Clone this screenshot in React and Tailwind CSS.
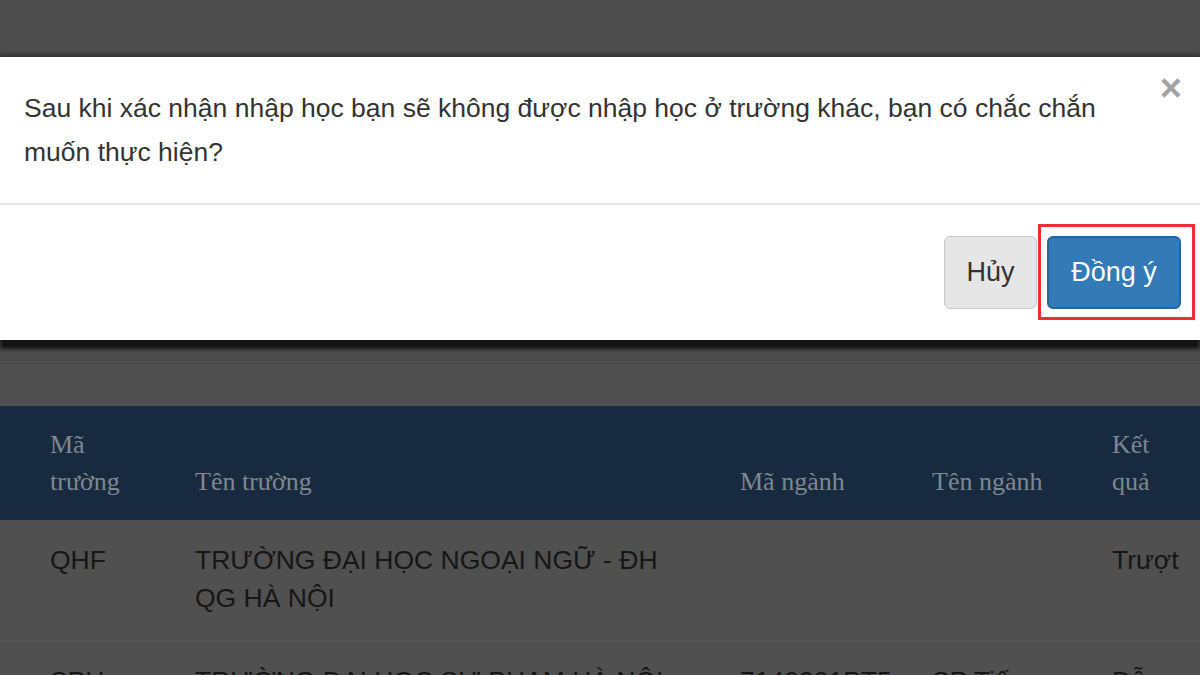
import React from "react";

const sans = { fontFamily: '"Liberation Sans", Arial, sans-serif' };
const serif = { fontFamily: '"Liberation Serif", "Times New Roman", serif' };

const rows = [
  { code: "QHF", school: "TRƯỜNG ĐẠI HỌC NGOẠI NGỮ - ĐH QG HÀ NỘI", major: "", majorName: "", result: "Trượt" },
  { code: "SPH", school: "TRƯỜNG ĐẠI HỌC SƯ PHẠM HÀ NỘI", major: "7140231PT5", majorName: "SP Tiếng Anh", result: "Đỗ" },
];

function ResultsTable() {
  return (
    <div className="bg-[#505050]">
      {/* header */}
      <div
        className="grid grid-cols-[145px_545px_192px_180px_1fr] items-end bg-[#182a3f] pl-[50px] pt-[20px] pb-[20px] text-[26px] leading-[37px] text-[#7f8791]"
        style={serif}
      >
        <div>
          Mã
          <br />
          trường
        </div>
        <div>Tên trường</div>
        <div>Mã ngành</div>
        <div>Tên ngành</div>
        <div>
          Kết
          <br />
          quả
        </div>
      </div>
      {rows.map((r) => (
        <div
          key={r.code}
          className="grid grid-cols-[145px_545px_192px_180px_1fr] border-b border-[#575757] pl-[50px] pt-[21px] pb-[23px] text-[26.5px] leading-[38px] text-[#161616]"
          style={sans}
        >
          <div>{r.code}</div>
          <div className="pr-[60px]">{r.school}</div>
          <div className="pr-[10px]">{r.major}</div>
          <div className="pr-[40px]">{r.majorName}</div>
          <div>{r.result}</div>
        </div>
      ))}
    </div>
  );
}

function ConfirmModal() {
  return (
    <div
      className="absolute left-0 right-0 top-[57px] bg-white shadow-[0_-3px_4px_rgba(0,0,0,0.35),0_9px_4px_rgba(0,0,0,0.75)]"
      style={sans}
    >
      <div className="flex items-start border-b-2 border-[#e5e5e5] pl-[24px] pr-[18px] pt-[29px] pb-[29px]">
        <p className="flex-1 pr-[40px] text-[26.5px] leading-[44px] text-[#333]">
          Sau khi xác nhận nhập học bạn sẽ không được nhập học ở trường khác, bạn có chắc chắn muốn thực hiện?
        </p>
        <button className="mt-[-20px] text-[38px] font-bold leading-[44px] text-[#a3a3a3]">×</button>
      </div>
      <div className="flex justify-end gap-[10px] pr-[19px] pt-[31px] pb-[31px]">
        <button className="h-[73px] w-[93px] rounded-[6px] border border-[#c8c8c8] bg-[#e6e6e6] text-[27px] text-[#333]">
          Hủy
        </button>
        <div className="relative">
          <button className="h-[73px] w-[134px] rounded-[6px] border-2 border-[#2a6496] bg-[#337ab7] text-[27px] text-white">
            Đồng ý
          </button>
          <div className="pointer-events-none absolute left-[-9px] right-[-14px] top-[-12px] bottom-[-11px] border-[3px] border-[#ee2e36]" />
        </div>
      </div>
    </div>
  );
}

export default function App() {
  return (
    <div className="relative h-[675px] w-[1200px] overflow-hidden bg-[#4d4d4d]">
      <div className="h-[406px] bg-[#4d4d4d]">
        <div className="h-[363px]" />
        <div className="h-[43px] border-t border-[#474747] bg-[#505050]" />
      </div>
      <ResultsTable />
      <ConfirmModal />
    </div>
  );
}
